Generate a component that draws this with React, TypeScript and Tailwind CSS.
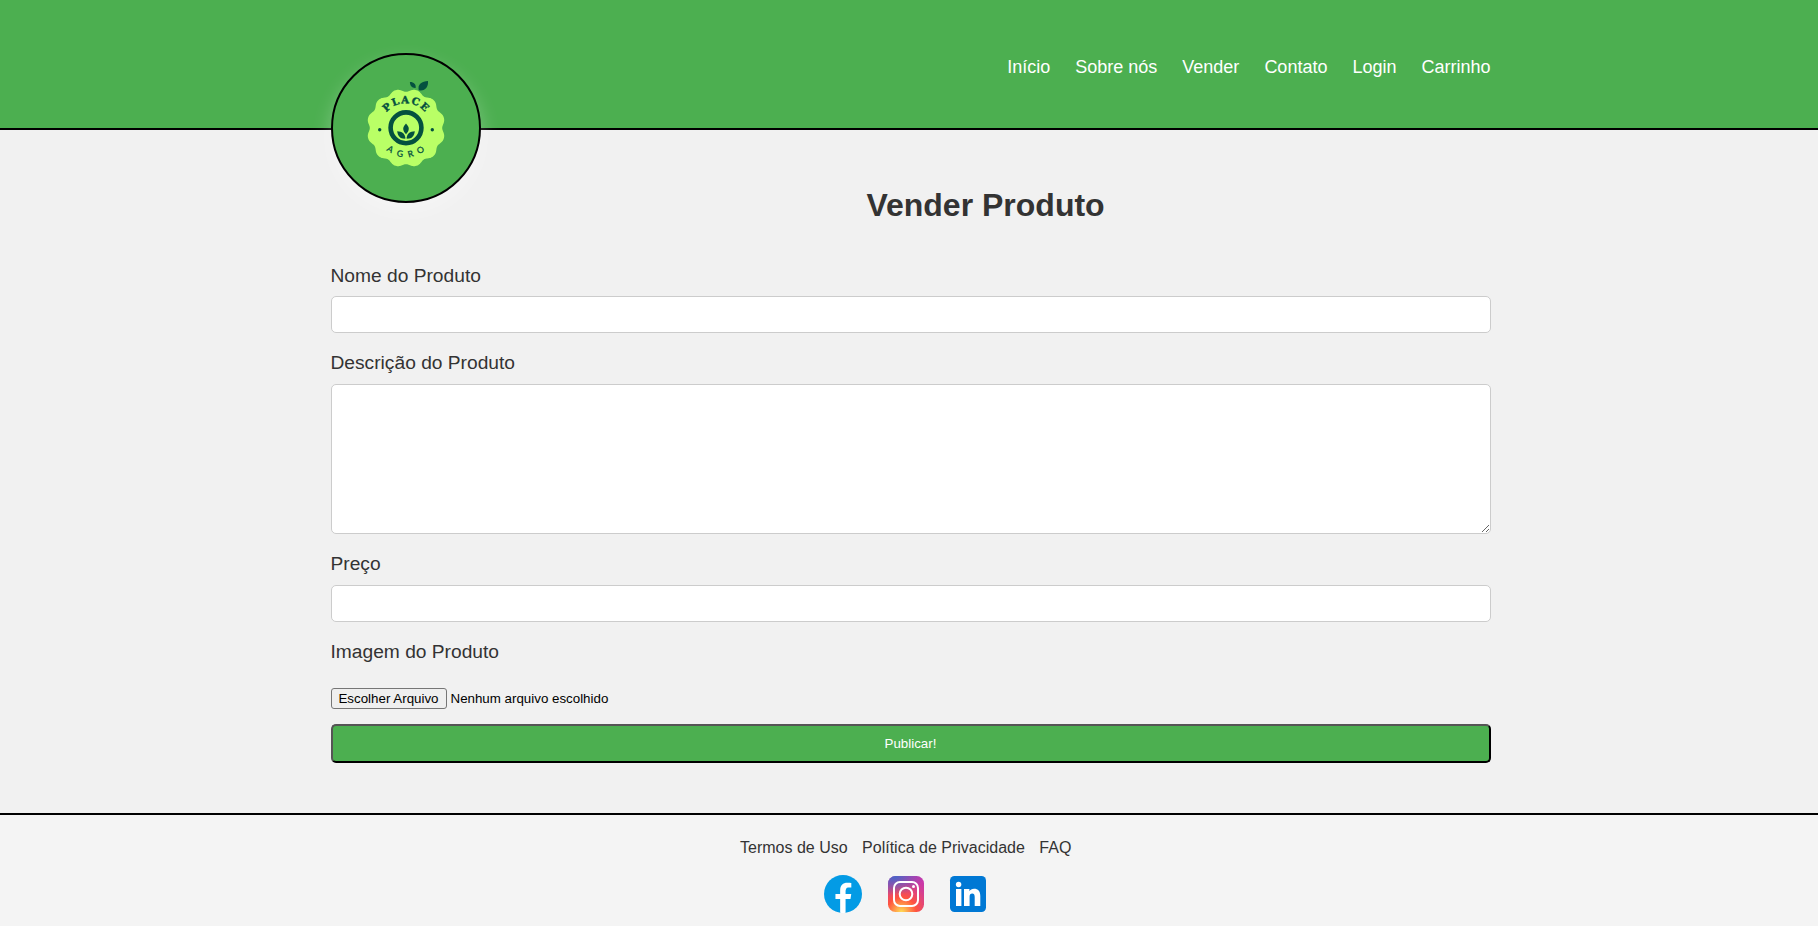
import React from "react";

const NAV_LINKS = ["Início", "Sobre nós", "Vender", "Contato", "Login", "Carrinho"];

function scallopPath(cx: number, cy: number, r: number, amp: number, lobes: number): string {
  const steps = 360;
  const points: string[] = [];
  for (let i = 0; i < steps; i++) {
    const a = (i / steps) * Math.PI * 2;
    const dip = Math.pow((1 + Math.cos(lobes * a)) / 2, 1.3);
    const rad = r + amp - 2 * amp * dip;
    points.push(`${(cx + rad * Math.sin(a)).toFixed(2)} ${(cy - rad * Math.cos(a)).toFixed(2)}`);
  }
  return `M${points.join("L")}Z`;
}

function BrandBadge() {
  return (
    <svg width="100" height="100" viewBox="0 0 100 100" className="shrink-0">
      <defs>
        <path id="arc-top" d="M25.2 50A24.8 24.8 0 0 1 74.8 50" />
        <path id="arc-bottom" d="M20.8 50A29.2 29.2 0 0 0 79.2 50" />
      </defs>
      <path d={scallopPath(50, 50, 37.7, 1.5, 12)} fill="#b9ff66" />
      <g fill="#04513f">
        <path d="M62.8 12.2C61.2 6.5 66 3 72 3C72.5 9 69 13.5 62.8 12.2Z" />
        <path d="M59.6 10C60.3 6.5 57.5 3.9 53.9 4.1C54 7.8 56 10.3 59.6 10Z" />
        <circle cx="23.7" cy="51.7" r="1.7" />
        <circle cx="76.3" cy="51.7" r="1.7" />
        <path d="M50 45.6C53.7 49.5 53.7 52.3 50 56.3C46.3 52.3 46.3 49.5 50 45.6Z" />
        <path d="M49.5 60.6C44.5 61 41.8 58.5 41.2 53.2C46 53.4 49 55.5 49.5 60.6Z" />
        <path d="M50.5 60.6C55.5 61 58.2 58.5 58.8 53.2C54 53.4 51 55.5 50.5 60.6Z" />
      </g>
      <circle cx="50" cy="49.8" r="15.4" fill="none" stroke="#04513f" strokeWidth="4.6" />
      <text
        fill="#04513f"
        stroke="#04513f"
        strokeWidth="0.4"
        fontFamily="'DejaVu Serif', 'Liberation Serif', serif"
        fontWeight="700"
        fontSize="10"
        textAnchor="middle"
        letterSpacing="1.5"
      >
        <textPath href="#arc-top" startOffset="50.5%">PLACE</textPath>
      </text>
      <text
        fill="#04513f"
        stroke="#04513f"
        strokeWidth="0.3"
        fontFamily="Lato, 'Liberation Sans', sans-serif"
        fontSize="8.6"
        textAnchor="middle"
        letterSpacing="6"
      >
        <textPath href="#arc-bottom" startOffset="53%">AGRO</textPath>
      </text>
    </svg>
  );
}

function FacebookIcon() {
  return (
    <svg width="48" height="48" viewBox="0 0 48 48">
      <circle cx="24" cy="24" r="19" fill="#039be5" />
      <path
        fill="#fff"
        d="M26.572 29.036h4.917l.772-4.995h-5.69v-2.73c0-2.075.678-3.915 2.619-3.915h3.119v-4.359c-.548-.074-1.707-.236-3.897-.236-4.573 0-7.254 2.415-7.254 7.917v3.323h-4.701v4.995h4.701v13.729C22.089 42.905 23.032 43 24 43c.875 0 1.729-.08 2.572-.194V29.036z"
      />
    </svg>
  );
}

function InstagramIcon() {
  return (
    <svg width="48" height="48" viewBox="0 0 48 48">
      <defs>
        <radialGradient id="ig-warm" cx="19.38" cy="42.035" r="44.899" gradientUnits="userSpaceOnUse">
          <stop offset="0" stopColor="#fd5" />
          <stop offset=".328" stopColor="#ff543f" />
          <stop offset=".348" stopColor="#fc5245" />
          <stop offset=".504" stopColor="#e64771" />
          <stop offset=".643" stopColor="#d53e91" />
          <stop offset=".761" stopColor="#cc39a4" />
          <stop offset=".841" stopColor="#c837ab" />
        </radialGradient>
        <radialGradient
          id="ig-cool"
          cx="11.786"
          cy="5.54"
          r="29.813"
          gradientTransform="matrix(1 0 0 .6663 0 1.849)"
          gradientUnits="userSpaceOnUse"
        >
          <stop offset="0" stopColor="#4168c9" />
          <stop offset=".999" stopColor="#4168c9" stopOpacity="0" />
        </radialGradient>
      </defs>
      <rect x="6" y="6" width="36" height="36" rx="7.5" fill="url(#ig-warm)" />
      <rect x="6" y="6" width="36" height="36" rx="7.5" fill="url(#ig-cool)" />
      <rect x="12" y="12" width="24" height="24" rx="6" fill="none" stroke="#fff" strokeWidth="2" />
      <circle cx="24" cy="24" r="6.3" fill="none" stroke="#fff" strokeWidth="2" />
      <circle cx="31.5" cy="16.5" r="1.5" fill="#fff" />
    </svg>
  );
}

function LinkedinIcon() {
  return (
    <svg width="48" height="48" viewBox="0 0 48 48">
      <rect x="6" y="6" width="36" height="36" rx="4.5" fill="#0078d4" />
      <circle cx="14.6" cy="14.5" r="2.7" fill="#fff" />
      <path
        fill="#fff"
        d="M12 19h5.4v17H12zM36.3 36h-5.6v-9.1c0-2.1-.8-3.3-2.5-3.3-1.7 0-2.6 1.2-2.6 3.2V36H20V19h5.4v2.3C26.2 19.8 27.8 18.8 30.1 18.8c3.9 0 6.2 2.4 6.2 7.3z"
      />
    </svg>
  );
}

function Label({ htmlFor, children }: { htmlFor: string; children: React.ReactNode }) {
  return (
    <label htmlFor={htmlFor} className="block text-[19.2px] leading-[22px]">
      {children}
    </label>
  );
}

export default function App() {
  return (
    <div className="flex h-[926px] w-full flex-col overflow-hidden bg-[#f1f1f1] font-['Liberation_Sans',Arial,sans-serif] text-[#333]">
      <header className="h-[130px] shrink-0 border-b-2 border-black bg-[#4caf50]">
        <div className="ml-[330.5px] flex w-[1160px] items-start justify-between pt-[53px]">
          <a
            href="#"
            className="relative flex size-[150px] items-center justify-center rounded-full border-2 border-black bg-[#4caf50] shadow-[0_10px_20px_rgba(255,255,255,0.3)]"
          >
            <BrandBadge />
          </a>
          <nav className="flex gap-[25px] pt-[4px] text-[18px] leading-[21px] text-white">
            {NAV_LINKS.map((label) => (
              <a key={label} href="#">
                {label}
              </a>
            ))}
          </nav>
        </div>
      </header>

      <main className="ml-[330.5px] h-[683px] w-[1160px] shrink-0">
        <h1 className="pt-[57px] pl-[150px] text-center text-[32px] leading-9 font-bold">Vender Produto</h1>
        <form className="pt-[42px]" onSubmit={(e) => e.preventDefault()}>
          <Label htmlFor="nome">Nome do Produto</Label>
          <input id="nome" className="mt-[9px] block h-[37px] w-full rounded-[5px] border border-[#ccc] bg-white px-2.5" />
          <div className="mt-[19px]">
            <Label htmlFor="descricao">Descrição do Produto</Label>
          </div>
          <textarea
            id="descricao"
            className="mt-[10px] block h-[150px] w-full resize-y rounded-[5px] border border-[#ccc] bg-white p-2.5"
          />
          <div className="mt-[19px]">
            <Label htmlFor="preco">Preço</Label>
          </div>
          <input id="preco" className="mt-[10px] block h-[37px] w-full rounded-[5px] border border-[#ccc] bg-white px-2.5" />
          <div className="mt-[19px]">
            <Label htmlFor="imagem">Imagem do Produto</Label>
          </div>
          <div className="mt-[25px] flex items-center gap-1 text-[13.333px] leading-[15px] text-black">
            <button
              id="imagem"
              type="button"
              className="h-[21px] w-[116px] rounded-[3px] border border-[#767676] bg-[#efefef] whitespace-nowrap"
            >
              Escolher Arquivo
            </button>
            <span>Nenhum arquivo escolhido</span>
          </div>
          <button
            type="submit"
            className="mt-[15px] block h-[39px] w-full rounded-[5px] border-2 border-t-[#555] border-r-black border-b-black border-l-[#555] bg-[#4caf50] text-[13.333px] leading-[15px] text-white"
          >
            Publicar!
          </button>
        </form>
      </main>

      <footer className="flex grow flex-col items-start border-t-2 border-black bg-[#f4f4f4] pt-[24px]">
        <div className="ml-[740px] flex gap-[14.5px] text-base leading-[18px]">
          <a href="#">Termos de Uso</a>
          <a href="#">Política de Privacidade</a>
          <a href="#">FAQ</a>
        </div>
        <div className="mt-[13px] ml-[819px] flex gap-[14.5px]">
          <FacebookIcon />
          <InstagramIcon />
          <LinkedinIcon />
        </div>
      </footer>
    </div>
  );
}
